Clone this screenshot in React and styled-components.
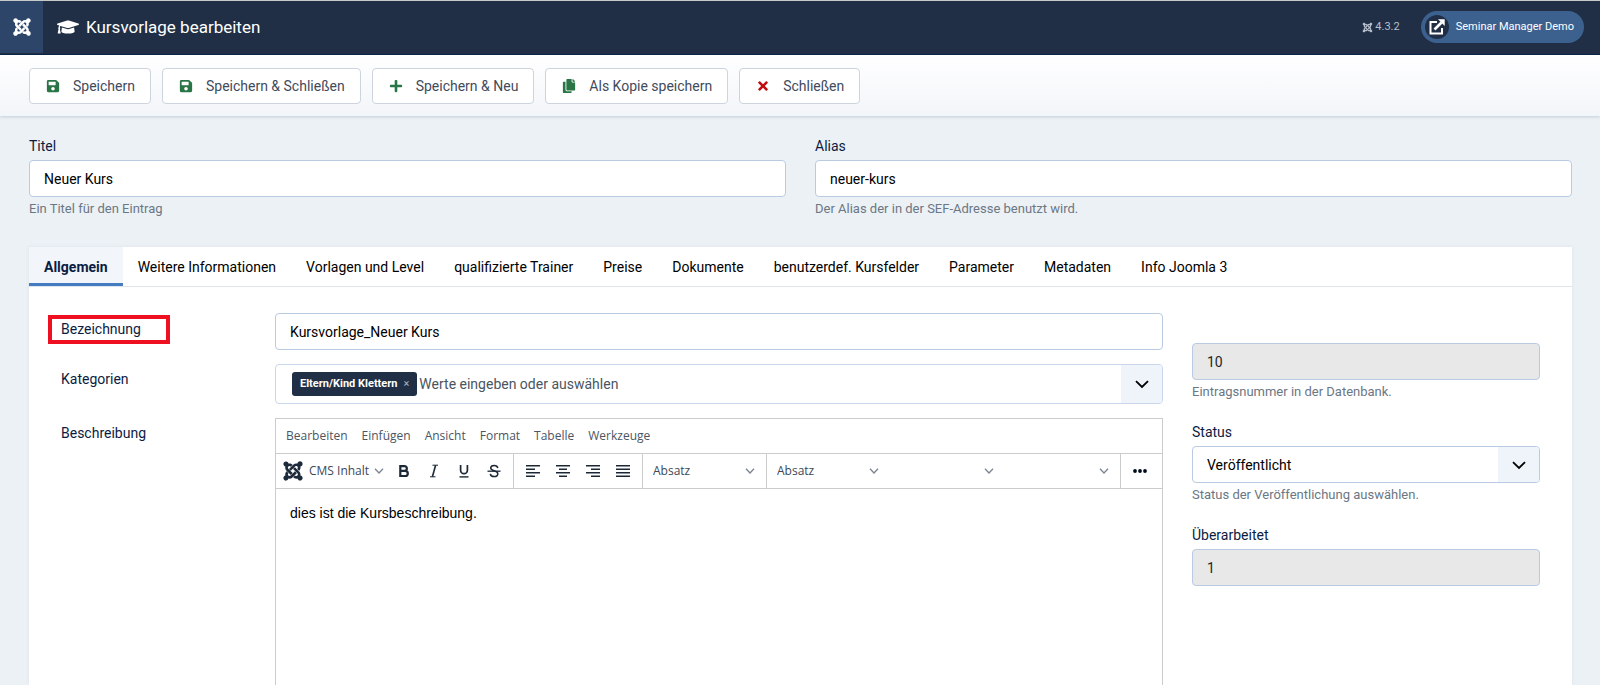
import React, { useState } from 'react';
import styled, { createGlobalStyle, css } from 'styled-components';
import { FaJoomla, FaGraduationCap, FaSave, FaPlus, FaCopy, FaTimes } from 'react-icons/fa';

const GlobalStyle = createGlobalStyle`
  *, *::before, *::after {
    box-sizing: border-box;
  }

  body {
    margin: 0;
    background: #ecf1f6;
    color: #0b1c32;
    font-family: Roboto, "Liberation Sans", sans-serif;
    font-size: 14px;
    line-height: 20px;
  }

  button, input, select, textarea {
    margin: 0;
    font: inherit;
    color: inherit;
  }
`;

const Page = styled.div`
  display: flex;
  flex-direction: column;
  height: 100vh;
  min-height: 600px;
  overflow: hidden;
`;

const Header = styled.header`
  display: flex;
  align-items: center;
  flex: none;
  height: 55px;
  padding: 0 16px 1px 0;
  border-top: 1px solid #c5cac9;
  border-bottom: 1px solid #0c2544;
  background: #202f45;
  color: #fff;
`;

const Brand = styled.a`
  display: flex;
  align-items: center;
  justify-content: center;
  align-self: stretch;
  width: 43px;
  background: #2c4568;
  color: #fff;
  font-size: 20px;
`;

const PageTitle = styled.h1`
  display: flex;
  align-items: center;
  gap: 7px;
  flex: 1;
  margin: 0;
  padding-left: 14px;
  font-size: 17px;
  font-weight: 400;
  line-height: 24px;
`;

const Version = styled.span`
  display: flex;
  align-items: center;
  gap: 2px;
  margin-right: 21px;
  color: #b6bfcb;
  font-size: 11px;
`;

const SiteLink = styled.a`
  display: flex;
  align-items: center;
  gap: 7px;
  height: 32px;
  padding: 0 10px 0 4px;
  border-radius: 16px;
  background: #3d618f;
  color: #fff;
  font-size: 11px;
  text-decoration: none;
`;

const SiteLinkIcon = styled.span`
  display: flex;
  align-items: center;
  justify-content: center;
  width: 24px;
  height: 24px;
  border-radius: 50%;
  background: #202f45;
`;

const Toolbar = styled.div`
  display: flex;
  align-items: center;
  flex: none;
  gap: 11px;
  height: 61px;
  padding: 0 28px 0 29px;
  background: linear-gradient(#fff, #f2f5f9);
  box-shadow: 0 1px 3px rgba(32, 60, 90, 0.2);
`;

const ToolbarButton = styled.button`
  display: flex;
  align-items: center;
  gap: 13px;
  height: 36px;
  padding: 0 15px 0 16px;
  border: 1px solid #cdd4dd;
  border-radius: 4px;
  background: #fff;
  color: #3f4b5b;
  cursor: pointer;

  svg {
    width: 14px;
    height: 14px;
    color: ${({ $tone }) => ($tone === 'danger' ? '#c00d0f' : '#2a7546')};
  }
`;

const TitleRow = styled.div`
  display: grid;
  grid-template-columns: 1fr 1fr;
  flex: none;
  gap: 29px;
  padding: 20px 28px 29px 29px;
`;

const Field = styled.div`
  display: flex;
  flex-direction: column;
`;

const Label = styled.label`
  margin-bottom: 4px;
  color: #0b1c42;
`;

const Hint = styled.small`
  margin-top: 3px;
  color: #6b7784;
  font-size: 13px;
  line-height: 18px;
`;

const controlStyle = css`
  width: 100%;
  height: 37px;
  padding: 0 14px;
  border: 1px solid #b9cae2;
  border-radius: 4px;
  background: #fff;
  color: #000;
`;

const TextInput = styled.input`
  ${controlStyle}

  &:read-only {
    background: #e8e8e8;
    color: #22262a;
  }
`;

const SelectBox = styled.div`
  display: grid;
`;

const Select = styled.select`
  ${controlStyle}
  grid-area: 1 / 1;
  appearance: none;
`;

const SelectArrow = styled.span`
  display: flex;
  align-items: center;
  justify-content: center;
  grid-area: 1 / 1;
  justify-self: end;
  width: 41px;
  margin: 1px;
  border-radius: 0 3px 3px 0;
  background: #eff4fb;
  color: #000;
  pointer-events: none;
`;

const Panel = styled.section`
  display: flex;
  flex-direction: column;
  flex: 1;
  min-height: 0;
  margin: 0 28px 0 29px;
  background: #fff;
  box-shadow: 0 0 4px rgba(32, 60, 90, 0.08);
`;

const Tabs = styled.div`
  display: flex;
  flex: none;
  height: 40px;
  border-bottom: 1px solid #dfe5ec;
`;

const Tab = styled.button`
  height: 39px;
  padding: 3px 15px 0;
  border: 0;
  border-bottom: 3px solid ${({ $active }) => ($active ? '#457cc0' : 'transparent')};
  background: ${({ $active }) => ($active ? '#f2f6fa' : 'none')};
  color: ${({ $active }) => ($active ? '#0b1c42' : '#000')};
  font-weight: ${({ $active }) => ($active ? 700 : 400)};
  white-space: nowrap;
  cursor: pointer;
`;

const PanelBody = styled.div`
  display: grid;
  grid-template-columns: minmax(0, 1102fr) minmax(0, 348fr);
  gap: 29px;
  flex: 1;
  min-height: 0;
  padding: 26px 32px 0;
`;

const MainColumn = styled.div`
  display: flex;
  flex-direction: column;
  gap: 14px;
  min-height: 0;
`;

const FormRow = styled.div`
  display: grid;
  grid-template-columns: 214px minmax(0, 1fr);
  flex: ${({ $grow }) => ($grow ? 1 : 'none')};
  min-height: 0;
`;

const RowLabel = styled.label`
  padding-top: 5px;
  color: #0b1c42;
`;

const MarkedLabel = styled.label`
  align-self: start;
  width: 122px;
  height: 29px;
  margin: 2px 0 0 -13px;
  padding: 0 9px;
  border: 4px solid #ee1020;
  color: #0b1c42;
`;

const SideColumn = styled.div`
  display: flex;
  flex-direction: column;
  gap: 21px;
  padding-top: 30px;
`;

const TagField = styled.div`
  display: flex;
  align-items: center;
  height: 40px;
  padding-left: 16px;
  border: 1px solid #c9d7ea;
  border-radius: 4px;
`;

const Tag = styled.span`
  display: flex;
  align-items: center;
  gap: 6px;
  height: 24px;
  padding: 0 8px;
  border-radius: 3px;
  background: #202f45;
  color: #fff;
  font-size: 11px;
  font-weight: 700;
  white-space: nowrap;
`;

const TagRemove = styled.button`
  padding: 0;
  border: 0;
  background: none;
  color: #a9b2be;
  font-weight: 400;
  cursor: pointer;
`;

const TagInput = styled.input`
  flex: 1;
  min-width: 0;
  padding: 0 2px;
  border: 0;
  background: none;
  outline: none;

  &::placeholder {
    color: #4a5561;
    opacity: 1;
  }
`;

const TagToggle = styled.button`
  display: flex;
  align-items: center;
  justify-content: center;
  align-self: stretch;
  width: 41px;
  padding: 0;
  border: 0;
  border-radius: 0 3px 3px 0;
  background: #eff4fb;
  color: #000;
`;

const Editor = styled.div`
  display: flex;
  flex-direction: column;
  min-height: 0;
  border: 1px solid #ccc;
  border-bottom: 0;
  color: #3c4858;
  font-family: "Open Sans", "Noto Sans", sans-serif;
  font-size: 12px;
`;

const MenuBar = styled.div`
  display: flex;
  align-items: center;
  flex: none;
  gap: 14px;
  height: 35px;
  padding: 0 10px;
  border-bottom: 1px solid #ccc;
`;

const MenuItem = styled.button`
  padding: 0;
  border: 0;
  background: none;
  color: #4b5563;
`;

const EditorTools = styled.div`
  display: flex;
  flex: none;
  height: 35px;
  border-bottom: 1px solid #ccc;
`;

const ToolGroup = styled.div`
  display: flex;
  align-items: stretch;
  padding: 0 4px;

  & + & {
    border-left: 1px solid #ccc;
  }

  &:last-child {
    flex: 1;
  }
`;

const ToolButton = styled.button`
  display: flex;
  align-items: center;
  justify-content: center;
  width: 30px;
  padding: 0;
  border: 0;
  background: none;
  color: #1c2836;
`;

const CmsButton = styled.button`
  display: flex;
  align-items: center;
  gap: 5px;
  width: 109px;
  padding: 0 2px;
  border: 0;
  background: none;
  white-space: nowrap;

  svg:first-child {
    flex: none;
    width: 22px;
    height: 22px;
    color: #1c2a3c;
  }
`;

const FormatBox = styled.div`
  display: grid;
  align-items: center;
  width: 115px;
`;

const FormatSelect = styled.select`
  grid-area: 1 / 1;
  width: 100%;
  height: 28px;
  padding: 0 6px;
  border: 0;
  background: none;
  appearance: none;
`;

const FormatArrow = styled.span`
  display: flex;
  grid-area: 1 / 1;
  justify-self: end;
  padding-right: 7px;
  pointer-events: none;
`;

const EditorText = styled.textarea`
  flex: 1;
  min-height: 0;
  padding: 12px 14px;
  border: 0;
  outline: none;
  resize: none;
  background: none;
  color: #000;
  font-family: "Liberation Sans", Arial, sans-serif;
  font-size: 14px;
  line-height: 24px;
`;

const Chevron = () => (
  <svg width="14" height="14" viewBox="0 0 14 14" fill="none" stroke="currentColor" strokeWidth="1.8" aria-hidden="true">
    <path d="M1 4.2 7 10l6-5.8" />
  </svg>
);

const ThinChevron = () => (
  <svg width="10" height="10" viewBox="0 0 10 10" fill="none" stroke="#7b8490" strokeWidth="1.3" aria-hidden="true">
    <path d="M1 2.8 5 7l4-4.2" />
  </svg>
);

const ExternalLinkIcon = () => (
  <svg width="16" height="16" viewBox="0 0 16 16" fill="none" stroke="#fff" strokeWidth="2" aria-hidden="true">
    <path d="M8 3H1.5v11.5H13V9" />
    <path d="M5.5 10.5 12.5 3.5" strokeWidth="2.6" />
    <path d="M9 .3h6.700V7Z" fill="#fff" stroke="none" />
  </svg>
);

const BoldIcon = () => (
  <svg width="14" height="14" viewBox="0 0 14 14" fill="none" stroke="currentColor" strokeWidth="2.2" aria-hidden="true">
    <path d="M3.300 2.100H7.500a2.300 2.300 0 0 1 0 4.700H3.300ZM3.300 6.800H8.200a2.600 2.600 0 0 1 0 5.200H3.300Z" />
  </svg>
);

const ItalicIcon = () => (
  <svg width="14" height="14" viewBox="0 0 14 14" fill="none" stroke="currentColor" strokeWidth="1.6" aria-hidden="true">
    <path d="M5.500 1.200H11M3 12.800H8.500" strokeWidth="1" />
    <path d="M8.600 1.200 5.400 12.800" />
  </svg>
);

const UnderlineIcon = () => (
  <svg width="14" height="14" viewBox="0 0 14 14" fill="none" stroke="currentColor" strokeWidth="1.7" aria-hidden="true">
    <path d="M3.600 1V6.200a3.400 3.400 0 0 0 6.800 0V1" />
    <path d="M2.500 12.900H11.500" strokeWidth="1.4" />
  </svg>
);

const StrikeIcon = () => (
  <svg width="14" height="14" viewBox="0 0 14 14" fill="none" stroke="currentColor" strokeWidth="1.5" aria-hidden="true">
    <path d="M10.800 4C10.500 2.300 9 1.500 7.200 1.500 5.200 1.500 3.700 2.500 3.700 4.100 3.700 7.500 10.800 6 10.800 9.700c0 1.800-1.600 2.900-3.700 2.900S3.500 11.500 3.300 9.800" />
    <path d="M0.500 7.200H13.500" strokeWidth="1.3" />
  </svg>
);

// x start and length of the two short lines for each alignment
const ALIGN_LINES = {
  left: [0, 9],
  center: [3, 8],
  right: [5, 9],
  justify: [0, 14],
};

const AlignIcon = ({ align }) => {
  const [x, width] = ALIGN_LINES[align];
  return (
    <svg width="14" height="14" viewBox="0 0 14 14" fill="currentColor" aria-hidden="true">
      <rect x="0" y="1" width="14" height="1.5" />
      <rect x={ x } y="4.5" width={ width } height="1.5" />
      <rect x="0" y="8" width="14" height="1.5" />
      <rect x={ x } y="11.5" width={ width } height="1.5" />
    </svg>
  );
};

const MoreIcon = () => (
  <svg width="14" height="14" viewBox="0 0 14 14" fill="#000b1c" aria-hidden="true">
    <circle cx="2" cy="7" r="1.9" />
    <circle cx="7" cy="7" r="1.9" />
    <circle cx="12" cy="7" r="1.9" />
  </svg>
);

const ACTIONS = [
  { label: 'Speichern', icon: FaSave },
  { label: 'Speichern & Schließen', icon: FaSave },
  { label: 'Speichern & Neu', icon: FaPlus },
  { label: 'Als Kopie speichern', icon: FaCopy },
  { label: 'Schließen', icon: FaTimes, tone: 'danger' },
];

const TABS = [
  'Allgemein',
  'Weitere Informationen',
  'Vorlagen und Level',
  'qualifizierte Trainer',
  'Preise',
  'Dokumente',
  'benutzerdef. Kursfelder',
  'Parameter',
  'Metadaten',
  'Info Joomla 3',
];

const MENUS = ['Bearbeiten', 'Einfügen', 'Ansicht', 'Format', 'Tabelle', 'Werkzeuge'];

const FormatDropdown = ({ label, value }) => (
  <FormatBox>
    <FormatSelect aria-label={ label }>
      <option>{ value }</option>
    </FormatSelect>
    <FormatArrow><ThinChevron /></FormatArrow>
  </FormatBox>
);

const DescriptionEditor = () => (
  <Editor>
    <MenuBar>
      { MENUS.map((menu) => <MenuItem key={ menu } type="button">{ menu }</MenuItem>) }
    </MenuBar>
    <EditorTools>
      <ToolGroup>
        <CmsButton type="button"><FaJoomla />CMS Inhalt<ThinChevron /></CmsButton>
        <ToolButton type="button" aria-label="Fett"><BoldIcon /></ToolButton>
        <ToolButton type="button" aria-label="Kursiv"><ItalicIcon /></ToolButton>
        <ToolButton type="button" aria-label="Unterstrichen"><UnderlineIcon /></ToolButton>
        <ToolButton type="button" aria-label="Durchgestrichen"><StrikeIcon /></ToolButton>
      </ToolGroup>
      <ToolGroup>
        { Object.keys(ALIGN_LINES).map((align) => (
          <ToolButton key={ align } type="button" aria-label={ align }><AlignIcon align={ align } /></ToolButton>
        )) }
      </ToolGroup>
      <ToolGroup>
        <FormatDropdown label="Format" value="Absatz" />
      </ToolGroup>
      <ToolGroup>
        <FormatDropdown label="Absatzformat" value="Absatz" />
        <FormatDropdown label="Schriftart" value="" />
        <FormatDropdown label="Schriftgröße" value="" />
      </ToolGroup>
      <ToolGroup>
        <ToolButton type="button" aria-label="Mehr"><MoreIcon /></ToolButton>
      </ToolGroup>
    </EditorTools>
    <EditorText id="description" defaultValue="dies ist die Kursbeschreibung." />
  </Editor>
);

const App = () => {
  const [activeTab, setActiveTab] = useState('Allgemein');

  return (
    <Page>
      <GlobalStyle />
      <Header>
        <Brand href="#" aria-label="Startseite"><FaJoomla /></Brand>
        <PageTitle><FaGraduationCap size={ 22 } />Kursvorlage bearbeiten</PageTitle>
        <Version><FaJoomla />4.3.2</Version>
        <SiteLink href="#">
          <SiteLinkIcon><ExternalLinkIcon /></SiteLinkIcon>
          Seminar Manager Demo
        </SiteLink>
      </Header>

      <Toolbar>
        { ACTIONS.map(({ label, icon: Icon, tone }) => (
          <ToolbarButton key={ label } type="button" $tone={ tone }><Icon />{ label }</ToolbarButton>
        )) }
      </Toolbar>

      <TitleRow>
        <Field>
          <Label htmlFor="title">Titel</Label>
          <TextInput id="title" defaultValue="Neuer Kurs" />
          <Hint>Ein Titel für den Eintrag</Hint>
        </Field>
        <Field>
          <Label htmlFor="alias">Alias</Label>
          <TextInput id="alias" defaultValue="neuer-kurs" />
          <Hint>Der Alias der in der SEF-Adresse benutzt wird.</Hint>
        </Field>
      </TitleRow>

      <Panel>
        <Tabs role="tablist">
          { TABS.map((tab) => (
            <Tab
              key={ tab }
              type="button"
              role="tab"
              aria-selected={ tab === activeTab }
              $active={ tab === activeTab }
              onClick={ () => setActiveTab(tab) }
            >
              { tab }
            </Tab>
          )) }
        </Tabs>

        <PanelBody>
          <MainColumn>
            <FormRow>
              <MarkedLabel htmlFor="name">Bezeichnung</MarkedLabel>
              <TextInput id="name" defaultValue="Kursvorlage_Neuer Kurs" />
            </FormRow>
            <FormRow>
              <RowLabel htmlFor="categories">Kategorien</RowLabel>
              <TagField>
                <Tag>
                  Eltern/Kind Klettern
                  <TagRemove type="button" aria-label="Entfernen">×</TagRemove>
                </Tag>
                <TagInput id="categories" placeholder="Werte eingeben oder auswählen" />
                <TagToggle type="button" aria-label="Auswahl öffnen"><Chevron /></TagToggle>
              </TagField>
            </FormRow>
            <FormRow $grow>
              <RowLabel htmlFor="description">Beschreibung</RowLabel>
              <DescriptionEditor />
            </FormRow>
          </MainColumn>

          <SideColumn>
            <Field>
              <TextInput aria-label="ID" defaultValue="10" readOnly />
              <Hint>Eintragsnummer in der Datenbank.</Hint>
            </Field>
            <Field>
              <Label htmlFor="state">Status</Label>
              <SelectBox>
                <Select id="state" defaultValue="1">
                  <option value="1">Veröffentlicht</option>
                  <option value="0">Versteckt</option>
                </Select>
                <SelectArrow><Chevron /></SelectArrow>
              </SelectBox>
              <Hint>Status der Veröffentlichung auswählen.</Hint>
            </Field>
            <Field>
              <Label htmlFor="revision">Überarbeitet</Label>
              <TextInput id="revision" defaultValue="1" readOnly />
            </Field>
          </SideColumn>
        </PanelBody>
      </Panel>
    </Page>
  );
};

export default App;
